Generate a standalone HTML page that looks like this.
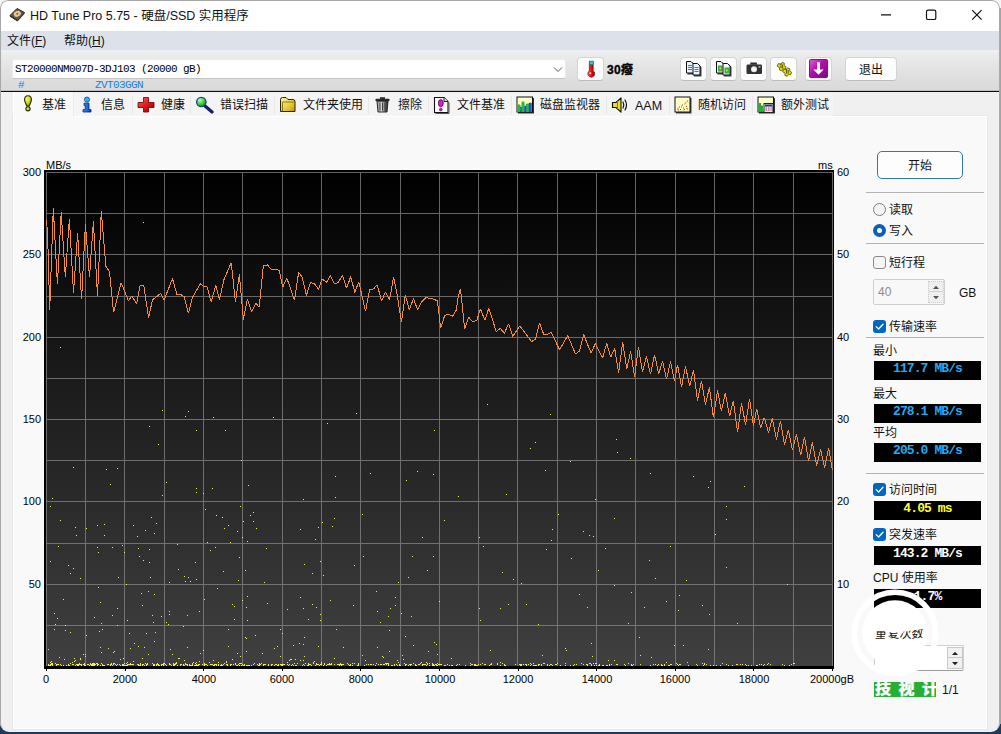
<!DOCTYPE html>
<html lang="zh-CN"><head><meta charset="utf-8"><title>HD Tune Pro 5.75 - 硬盘/SSD 实用程序</title>
<style>
*{box-sizing:border-box;margin:0;padding:0}
html,body{width:1001px;height:734px;overflow:hidden}
html{background:linear-gradient(#f6f6f6 0,#f6f6f6 722px,#1b3a63 722px)}
body{font-family:"Liberation Sans","Noto Sans CJK SC",sans-serif;font-size:12px;color:#111;position:relative}
.abs{position:absolute}
#win{position:absolute;left:0;top:0;width:1000px;height:732px;background:#f0f0f0;border-radius:8px 8px 9px 9px;overflow:hidden}
#frame{position:absolute;left:0;top:0;width:1000px;height:732px;border-radius:8px 8px 9px 9px;border:1px solid #a8a8a8;border-right-color:#aaa;border-bottom:0;pointer-events:none;z-index:9}
#title{position:absolute;left:0;top:0;width:1001px;height:31px;background:#fff}
#title .t{position:absolute;left:30px;top:8px;font-size:12.5px;line-height:16px;color:#111;white-space:nowrap;letter-spacing:0}
#menu{position:absolute;left:0;top:31px;width:1001px;height:19px;background:#dde2ea}
#menu span{position:absolute;top:2px;font-size:12px;line-height:16px;white-space:nowrap}
#combo{position:absolute;left:12px;top:59px;width:555px;height:20px;background:#fff;border:1px solid #e3e3e3;border-bottom-color:#bdbdbd;border-radius:3px}
.mono{font-family:"Liberation Mono","Noto Sans CJK SC",monospace}
#combo .v{position:absolute;left:2px;top:2px;font-size:11px;letter-spacing:-.6px;white-space:pre;color:#000}
#strip{position:absolute;left:0;top:79px;width:1001px;height:12px;background:linear-gradient(#e9e9e9,#dadada)}
#strip span{position:absolute;top:-2px;font-size:11px;letter-spacing:-.6px;color:#1a7fe0;white-space:pre}
#cut{position:absolute;left:0;top:91px;width:1001px;height:1px;background:#0c0c0c;box-shadow:0 -1px 0 rgba(0,0,0,.12)}
#tabs{position:absolute;left:0;top:92px;width:1001px;height:24px}
.tab{position:absolute;top:2px;height:22px;font-size:12px;white-space:nowrap}
.tab .lb{position:absolute;top:3px;line-height:16px}
.sep{position:absolute;top:4px;width:1px;height:18px;background:#e8e8e8}
#page{position:absolute;left:13px;top:116px;width:974px;height:613px;background:#f9f9f9;border:1px solid #fff;box-shadow:0 0 0 1px #e9e9e9}
#acttab{position:absolute;left:13px;top:92px;width:61px;height:25px;background:#f9f9f9;border-left:1px solid #fff;border-right:1px solid #ececec}
.ax{position:absolute;font-size:11px;color:#000;white-space:nowrap;line-height:12px}
.chart{position:absolute;left:44px;top:170px}
.hr{position:absolute;height:1px;background:#b4b4b4}
.lbl{position:absolute;font-size:12px;white-space:nowrap;line-height:14px;color:#111;margin-top:1px}
.lcd{position:absolute;left:874px;width:107px;height:19px;background:#000;text-align:center;font-family:"Liberation Mono",monospace;font-weight:bold;font-size:13px;letter-spacing:-.9px;line-height:15px;white-space:pre;overflow:hidden}
.cb{position:absolute;width:13px;height:13px;border-radius:3px;background:#0067c0}
.cb svg{position:absolute;left:0;top:0}
.btn{position:absolute;background:#fdfdfd;border:1px solid #d4d4d4;border-bottom-color:#bcbcbc;border-radius:4px}
</style></head><body>
<i class="abs" style="left:1000px;top:8px;width:1px;height:716px;background:#a4a4a4"></i>
<div id="win">
<div id="title"><span class="t">HD Tune Pro 5.75 - 硬盘/SSD 实用程序</span></div>
<div id="menu"><span style="left:7px">文件(<u>F</u>)</span><span style="left:64px">帮助(<u>H</u>)</span></div>
<div id="page"></div>
<div id="acttab"></div>
<div id="tabs">
<div class="abs" style="left:74px;top:1px;width:759px;height:23px;background:#f4f4f4;border-radius:0 4px 0 0"></div>
<i class="sep" style="left:132px"></i>
<i class="sep" style="left:190px"></i>
<i class="sep" style="left:274px"></i>
<i class="sep" style="left:368px"></i>
<i class="sep" style="left:428px"></i>
<i class="sep" style="left:511px"></i>
<i class="sep" style="left:606px"></i>
<i class="sep" style="left:669px"></i>
<i class="sep" style="left:752px"></i>
<svg class="abs" style="left:22.7px;top:3px" width="10" height="17" viewBox="0 0 10 17"><defs><radialGradient id="gy" cx=".35" cy=".3" r=".8"><stop offset="0" stop-color="#f4f870"/><stop offset=".5" stop-color="#d0dc18"/><stop offset="1" stop-color="#7a8000"/></radialGradient></defs><path d="M5 .8C7.6 .8 8.6 2.6 8.4 5C8.2 7.4 6.8 9.2 6.4 11H3.6C3.2 9.200 1.800 7.400 1.600 5C1.400 2.600 2.400 .8 5 .8Z" fill="url(#gy)" stroke="#2a2a08" stroke-width="1.100"/><circle cx="5" cy="13.800" r="2.1" fill="url(#gy)" stroke="#2a2a08" stroke-width="1.100"/></svg>
<svg class="abs" style="left:81px;top:4px" width="12" height="17" viewBox="0 0 12 17"><defs><linearGradient id="gb" x1="0" y1="0" x2="1" y2="0"><stop offset="0" stop-color="#3aa0f0"/><stop offset="1" stop-color="#0a3ab8"/></linearGradient></defs><circle cx="6" cy="3.6" r="2.600" fill="#2fb4e8" stroke="#0b4a9a" stroke-width=".8"/><path d="M3 7.200H8V13.600H10V16H2V13.600H4.200V9.400H3Z" fill="url(#gb)" stroke="#06247a" stroke-width=".8"/></svg>
<svg class="abs" style="left:137px;top:4px" width="18" height="17" viewBox="0 0 18 17"><defs><linearGradient id="gr" x1="0" y1="0" x2="1" y2="1"><stop offset="0" stop-color="#ff6a6a"/><stop offset=".5" stop-color="#e01818"/><stop offset="1" stop-color="#8a0000"/></linearGradient></defs><path d="M6.500 1.500H11.500V6.500H17V11.500H11.500V16H6.500V11.500H1V6.500H6.500Z" fill="url(#gr)" stroke="#7a0a0a" stroke-width=".9"/></svg>
<svg class="abs" style="left:195px;top:3px" width="20" height="19" viewBox="0 0 20 19"><defs><radialGradient id="gg" cx=".35" cy=".3" r=".8"><stop offset="0" stop-color="#b8ffb0"/><stop offset=".6" stop-color="#30c830"/><stop offset="1" stop-color="#0a7a10"/></radialGradient></defs><path d="M9.500 10.500L17 17" stroke="#14206a" stroke-width="3.200" stroke-linecap="round"/><circle cx="6.300" cy="7" r="4.700" fill="url(#gg)" stroke="#20408a" stroke-width="1.300"/></svg>
<svg class="abs" style="left:279px;top:4px" width="18" height="17" viewBox="0 0 18 17"><defs><linearGradient id="gf" x1="0" y1="0" x2="1" y2="1"><stop offset="0" stop-color="#fff8a0"/><stop offset=".6" stop-color="#e8cc30"/><stop offset="1" stop-color="#b89010"/></linearGradient></defs><path d="M1.500 15.500V3.500Q1.500 1.500 3.500 1.500H7L9 3.500H14Q16 3.500 16 5.500V15.500Z" fill="url(#gf)" stroke="#2a2200" stroke-width="1"/><path d="M3.500 15.500V6H16" fill="none" stroke="#6a5a10" stroke-width=".8"/></svg>
<svg class="abs" style="left:374px;top:4px" width="17" height="17" viewBox="0 0 17 17"><defs><linearGradient id="gt" x1="0" y1="0" x2="1" y2="0"><stop offset="0" stop-color="#8a8a8a"/><stop offset=".4" stop-color="#d8d8d8"/><stop offset="1" stop-color="#1a1a1a"/></linearGradient></defs><path d="M6 1.200H11V3H6Z" fill="#333"/><rect x="1.500" y="2.800" width="14" height="2.400" rx=".8" fill="#2a2a2a"/><path d="M3 5.200H14L13 16H4Z" fill="url(#gt)" stroke="#1a1a1a" stroke-width=".9"/><path d="M6 6.500V14.500M8.500 6.500V14.500M11 6.500V14.500" stroke="#333" stroke-width=".9"/></svg>
<svg class="abs" style="left:433px;top:4px" width="17" height="18" viewBox="0 0 17 18"><path d="M1.500 1.500H11L15 5.500V16.500H1.500Z" fill="#fdfdfd" stroke="#111" stroke-width="1.100"/><path d="M11 1.500V5.500H15" fill="#ddd" stroke="#111" stroke-width=".9"/><path d="M16 6.500V17.500H2.500" fill="none" stroke="#555" stroke-width="1"/><ellipse cx="7.800" cy="7.200" rx="2.500" ry="3.600" fill="#d020c8" stroke="#5a0a5a" stroke-width=".8"/><circle cx="7.800" cy="13.600" r="1.400" fill="#d020c8" stroke="#5a0a5a" stroke-width=".7"/></svg>
<svg class="abs" style="left:516px;top:4px" width="19" height="18" viewBox="0 0 19 18"><rect x="2" y="2" width="16" height="15.500" fill="#333"/><rect x="1" y="1" width="15.500" height="15" fill="#ffffc8" stroke="#111" stroke-width="1"/><path d="M2 16V9H4V16M6 16V6H8V16M10.500 16V8H12.500V16" fill="#20c028" stroke="#20c028" stroke-width="1"/><path d="M4.500 16V11H5.500V16M8.500 16V10H10V16M13 16V7H15.500V16" fill="#2050d0" stroke="#2050d0" stroke-width=".6"/></svg>
<svg class="abs" style="left:611px;top:4px" width="19" height="18" viewBox="0 0 19 18"><path d="M1.500 6.500H5L10 1.800V16.200L5 11.500H1.500Z" fill="#e8e020" stroke="#111" stroke-width="1.100" stroke-linejoin="round"/><path d="M6.500 5V13" stroke="#8a8400" stroke-width="1"/><path d="M12 6Q13.600 9 12 12M14 4Q17 9 14 14" fill="none" stroke="#111" stroke-width="1.200" stroke-linecap="round"/></svg>
<svg class="abs" style="left:674px;top:4px" width="18" height="18" viewBox="0 0 18 18"><rect x="2" y="2" width="15.500" height="15.500" fill="#444"/><rect x="1" y="1" width="15" height="15" fill="#ffffc8" stroke="#111" stroke-width="1"/><path d="M3 13h1M5 11h1M6 13.500h1M8 9h1M9 12h1M11 7h1M12 10.500h1M13 5h1M10 13.500h1M13 13h1M7 11h1M4 14h1" stroke="#e03030" stroke-width="1"/><path d="M4 12h1M7 10h1M10 8h1M12 6h1M12 12.500h1M9 14h1" stroke="#e0a020" stroke-width="1"/></svg>
<svg class="abs" style="left:757px;top:4px" width="19" height="18" viewBox="0 0 19 18"><rect x="2" y="2" width="16" height="15.500" fill="#333"/><rect x="1" y="1" width="15.500" height="15" fill="#ffffc8" stroke="#111" stroke-width="1"/><path d="M1.500 16V7H4V9.500H6V16Z" fill="#20b030"/><rect x="7" y="7.500" width="9" height="9" fill="#e8e8f4" stroke="#223" stroke-width="1"/><rect x="8" y="8.500" width="7" height="2" fill="#303060"/><path d="M8.500 12h1.500M11 12h1.500M13.500 12h1.200M8.500 14h1.500M11 14h1.500M13.500 14h1.200" stroke="#c03060" stroke-width="1.200"/></svg>
<span class="tab" style="left:42px"><span class="lb">基准</span></span>
<span class="tab" style="left:101px"><span class="lb">信息</span></span>
<span class="tab" style="left:161px"><span class="lb">健康</span></span>
<span class="tab" style="left:220px"><span class="lb">错误扫描</span></span>
<span class="tab" style="left:303px"><span class="lb">文件夹使用</span></span>
<span class="tab" style="left:398px"><span class="lb">擦除</span></span>
<span class="tab" style="left:457px"><span class="lb">文件基准</span></span>
<span class="tab" style="left:540px"><span class="lb">磁盘监视器</span></span>
<span class="tab" style="left:635px"><span class="lb" style="font-size:12.500px;top:4px">AAM</span></span>
<span class="tab" style="left:698px"><span class="lb">随机访问</span></span>
<span class="tab" style="left:781px"><span class="lb">额外测试</span></span>
</div>
<div class="abs" style="left:0;top:50px;width:1001px;height:41px;background:linear-gradient(#eef1f5 0,#ececec 4px,#e3e3e3 45%,#d9d9d9 100%);z-index:0"></div>
<div class="abs" style="left:12px;top:59px;width:554px;height:20px;background:#fff;border:1px solid #ececec;border-bottom:1px solid #c4c4c4;border-radius:3px"><span class="mono" style="position:absolute;left:2px;top:3px;font-size:11px;letter-spacing:-.6px;white-space:pre;color:#000">ST20000NM007D-3DJ103 (20000 gB)</span><svg class="abs" style="left:540px;top:6px" width="10" height="7" viewBox="0 0 10 7"><path d="M1 1.500L5 5.500L9 1.500" fill="none" stroke="#555" stroke-width="1"/></svg></div>
<span class="mono abs" style="left:18px;top:79px;font-size:11px;letter-spacing:-.6px;color:#1a7fe0;white-space:pre;line-height:13px">#</span>
<span class="mono abs" style="left:95px;top:79px;font-size:11px;letter-spacing:-.6px;color:#1a7fe0;white-space:pre;line-height:13px">ZVT03GGN</span>
<div class="btn" style="left:577px;top:57px;width:27px;height:24px"><svg class="abs" style="left:7.500px;top:2px" width="10.500" height="18" viewBox="0 0 11 19"><defs><linearGradient id="th" x1="0" y1="0" x2="1" y2="0"><stop offset="0" stop-color="#ff7070"/><stop offset=".5" stop-color="#e01010"/><stop offset="1" stop-color="#900"/></linearGradient></defs><path d="M3.500 1.500H7.500V11.500A3.600 3.600 0 1 1 3.500 11.500Z" fill="url(#th)" stroke="#7a0a0a" stroke-width=".8"/><rect x="3.500" y="1.200" width="4" height="3.600" fill="#38c8d8" stroke="#176" stroke-width=".6"/><circle cx="4.600" cy="14" r="1" fill="#fff" opacity=".8"/></svg></div>
<span class="abs" style="left:607px;top:63px;font-size:12px;font-weight:bold;color:#000;letter-spacing:.3px;-webkit-text-stroke:.35px #000;line-height:15px;white-space:nowrap">30癈</span>
<div class="btn" style="left:680px;top:57px;width:27px;height:24px"><svg class="abs" style="left:4px;top:2px" width="20" height="20" viewBox="0 0 20 20"><path d="M2.5 2.5h5l2.500 2.500v9.500h-7.500z" fill="#444"/><path d="M1.5 1.5h4.500l2.500 2.500v9h-7z" fill="#eaf4ff" stroke="#111" stroke-width="1"/><path d="M3.0 5.5h4M3.0 7.5h4M3.0 9.5h4" stroke="#2a7ae0" stroke-width="1.100"/><path d="M9 4.5h5l2.500 2.500v9.500h-7.500z" fill="#444"/><path d="M8 3.5h4.500l2.500 2.500v9h-7z" fill="#eaf4ff" stroke="#111" stroke-width="1"/><path d="M9.5 7.5h4M9.5 9.5h4M9.5 11.5h4" stroke="#2a7ae0" stroke-width="1.100"/></svg></div>
<div class="btn" style="left:710px;top:57px;width:27px;height:24px"><svg class="abs" style="left:4px;top:2px" width="20" height="20" viewBox="0 0 20 20"><path d="M2.5 2.5h5l2.500 2.500v9.500h-7.500z" fill="#444"/><path d="M1.5 1.5h4.500l2.500 2.500v9h-7z" fill="#f4f4fa" stroke="#111" stroke-width="1"/><rect x="3.0" y="5.5" width="4.500" height="6" fill="#30b048"/><rect x="4.5" y="7.5" width="1.600" height="1.800" fill="#e8e020"/><path d="M9 4.5h5l2.500 2.500v9.500h-7.500z" fill="#444"/><path d="M8 3.5h4.500l2.500 2.500v9h-7z" fill="#f4f4fa" stroke="#111" stroke-width="1"/><rect x="9.5" y="7.5" width="4.500" height="6" fill="#30b048"/><rect x="11" y="9.5" width="1.600" height="1.800" fill="#e8e020"/></svg></div>
<div class="btn" style="left:740px;top:57px;width:27px;height:24px"><svg class="abs" style="left:4.500px;top:4px" width="18" height="14" viewBox="0 0 18 14"><path d="M4.500 .5h6l1 2.200H4z" fill="#2c302c"/><rect x=".5" y="2.500" width="15.500" height="9.500" rx="1.300" fill="#2f332f"/><circle cx="8" cy="7.300" r="3" fill="#e8e8e8"/><circle cx="8" cy="7.300" r="1.600" fill="#fff"/><rect x="12.500" y="4.200" width="2" height="1.400" fill="#bbb"/></svg></div>
<div class="btn" style="left:770px;top:57px;width:27px;height:24px"><svg class="abs" style="left:4px;top:3px" width="19" height="18" viewBox="0 0 19 18"><g fill="#e0dc18" stroke="#6e6a00" stroke-width="1"><path d="M2 5l1.600-2.400 2.200.6 1.200-1.800 2.300.9-.2 2.100 2 1.400-.9 2.300-2.100-.2-1.400 1.900-2.300-.9.200-2.100z"/><path d="M7.500 10.500l1.600-2.400 2.200.6 1.200-1.800 2.300.9-.2 2.100 2 1.400-.9 2.300-2.100-.2-1.400 1.900-2.300-.9.200-2.100z"/></g><path d="M6 2.500v4.500M7.600 3.500v3.800M11.500 8v4.500M13.100 9v3.800" stroke="#5c5800" stroke-width="1"/></svg></div>
<div class="btn" style="left:805px;top:57px;width:27px;height:24px"><svg class="abs" style="left:3px;top:1px" width="20" height="20" viewBox="0 0 21 21"><defs><linearGradient id="pu" x1="0" y1="0" x2="1" y2="1"><stop offset="0" stop-color="#e060d8"/><stop offset=".45" stop-color="#b010a8"/><stop offset="1" stop-color="#7a0a78"/></linearGradient></defs><rect x=".5" y=".5" width="19" height="19" rx="1.500" fill="url(#pu)" stroke="#800a80" stroke-width="1"/><path d="M8.500 3.500h3v7.500h4L10 16.500 4.500 11h4z" fill="#fff"/></svg></div>
<div class="btn" style="left:845px;top:57px;width:52px;height:24px"><span class="abs" style="left:0;top:5px;width:50px;text-align:center;font-size:12px;line-height:15px">退出</span></div>
<svg class="abs" style="left:9px;top:7px" width="17" height="15" viewBox="0 0 17 15"><path d="M1 8.500L8 1.500L15.500 5.500L8.500 13.500Z" fill="#6a5a48" stroke="#2a2218" stroke-width="1"/><path d="M1 8.500L8.500 13.500V14.500L1 9.800Z" fill="#222"/><path d="M8.500 13.500L15.500 5.500V6.800L8.500 14.500Z" fill="#333"/><ellipse cx="8.300" cy="6.800" rx="3.600" ry="2.800" fill="#e8c890" transform="rotate(-25 8.300 6.800)"/><circle cx="8.300" cy="6.800" r="1" fill="#7a5a30"/></svg>
<svg class="abs" style="left:876px;top:5px" width="112" height="20" viewBox="0 0 112 20"><path d="M5 9.800H15" stroke="#111" stroke-width="1.200"/><rect x="50.500" y="5.200" width="9.300" height="9.300" rx="1.600" fill="none" stroke="#111" stroke-width="1.200"/><path d="M96.200 5.200L105.600 14.600M105.600 5.200L96.200 14.600" stroke="#111" stroke-width="1.200"/></svg>
<div id="cut"></div>
<span class="ax" style="left:46px;top:159px">MB/s</span>
<span class="ax" style="left:818px;top:159px">ms</span>
<span class="ax" style="left:10px;width:31px;text-align:right;top:166px">300</span>
<span class="ax" style="left:10px;width:31px;text-align:right;top:248px">250</span>
<span class="ax" style="left:10px;width:31px;text-align:right;top:331px">200</span>
<span class="ax" style="left:10px;width:31px;text-align:right;top:413px">150</span>
<span class="ax" style="left:10px;width:31px;text-align:right;top:495px">100</span>
<span class="ax" style="left:10px;width:31px;text-align:right;top:578px">50</span>
<span class="ax" style="left:837px;top:166px">60</span>
<span class="ax" style="left:837px;top:248px">50</span>
<span class="ax" style="left:837px;top:331px">40</span>
<span class="ax" style="left:837px;top:413px">30</span>
<span class="ax" style="left:837px;top:495px">20</span>
<span class="ax" style="left:837px;top:578px">10</span>
<span class="ax" style="left:16px;width:60px;text-align:center;top:673px">0</span>
<span class="ax" style="left:95px;width:60px;text-align:center;top:673px">2000</span>
<span class="ax" style="left:174px;width:60px;text-align:center;top:673px">4000</span>
<span class="ax" style="left:252px;width:60px;text-align:center;top:673px">6000</span>
<span class="ax" style="left:331px;width:60px;text-align:center;top:673px">8000</span>
<span class="ax" style="left:410px;width:60px;text-align:center;top:673px">10000</span>
<span class="ax" style="left:488px;width:60px;text-align:center;top:673px">12000</span>
<span class="ax" style="left:567px;width:60px;text-align:center;top:673px">14000</span>
<span class="ax" style="left:645px;width:60px;text-align:center;top:673px">16000</span>
<span class="ax" style="left:724px;width:60px;text-align:center;top:673px">18000</span>
<span class="ax" style="left:810px;top:673px">20000gB</span><i class="abs" style="left:46px;top:668px;width:1px;height:3px;background:#000"></i><i class="abs" style="left:125px;top:668px;width:1px;height:3px;background:#000"></i><i class="abs" style="left:203px;top:668px;width:1px;height:3px;background:#000"></i><i class="abs" style="left:282px;top:668px;width:1px;height:3px;background:#000"></i><i class="abs" style="left:360px;top:668px;width:1px;height:3px;background:#000"></i><i class="abs" style="left:439px;top:668px;width:1px;height:3px;background:#000"></i><i class="abs" style="left:518px;top:668px;width:1px;height:3px;background:#000"></i><i class="abs" style="left:596px;top:668px;width:1px;height:3px;background:#000"></i><i class="abs" style="left:675px;top:668px;width:1px;height:3px;background:#000"></i><i class="abs" style="left:753px;top:668px;width:1px;height:3px;background:#000"></i><i class="abs" style="left:832px;top:668px;width:1px;height:3px;background:#000"></i>
<svg class="chart" width="790" height="499" viewBox="0 0 790 499">
<defs><linearGradient id="cg" x1="0" y1="0" x2="0" y2="1"><stop offset="0" stop-color="#000"/><stop offset="1" stop-color="#404040"/></linearGradient></defs>
<rect width="790" height="499" fill="#000"/>
<rect x="2" y="2" width="787" height="494" fill="url(#cg)"/>
<path d="M2.5 2V496M41.5 2V496M80.5 2V496M120.5 2V496M159.5 2V496M198.5 2V496M238.5 2V496M277.5 2V496M316.5 2V496M356.5 2V496M395.5 2V496M434.5 2V496M473.5 2V496M513.5 2V496M552.5 2V496M591.5 2V496M631.5 2V496M670.5 2V496M709.5 2V496M749.5 2V496M788.5 2V496M2 2.5H789M2 43.5H789M2 84.5H789M2 126.5H789M2 167.5H789M2 208.5H789M2 249.5H789M2 290.5H789M2 331.5H789M2 373.5H789M2 414.5H789M2 455.5H789" stroke="#8a8a8a" stroke-opacity=".72" stroke-width="1" fill="none" shape-rendering="crispEdges"/>
<path d="M247 495.5h1M407 495.5h1M47 494.5h1M56 495.5h1M96 493.5h1M438 493.5h1M738 494.5h1M112 494.5h1M139 494.5h1M415 494.5h1M48 495.5h1M240 494.5h1M344 495.5h1M187 494.5h1M552 495.5h1M117 495.5h1M33 495.5h1M662 494.5h1M440 494.5h1M360 493.5h1M49 493.5h1M622 492.5h1M294 494.5h1M130 495.5h1M47 494.5h1M64 494.5h1M213 494.5h1M724 493.5h1M136 495.5h1M447 494.5h1M6 494.5h1M391 494.5h1M512 494.5h1M298 494.5h1M81 495.5h1M160 495.5h1M259 494.5h1M79 495.5h1M22 495.5h1M193 495.5h1M277 493.5h1M354 492.5h1M68 495.5h1M627 494.5h1M401 495.5h1M200 495.5h1M129 493.5h1M251 495.5h1M174 495.5h1M24 495.5h1M198 494.5h1M169 495.5h1M151 493.5h1M67 493.5h1M137 494.5h1M549 493.5h1M99 494.5h1M113 494.5h1M267 495.5h1M625 495.5h1M193 495.5h1M198 494.5h1M269 493.5h1M381 494.5h1M397 494.5h1M6 495.5h1M133 495.5h1M248 494.5h1M83 495.5h1M389 494.5h1M344 493.5h1M712 495.5h1M636 494.5h1M58 494.5h1M58 495.5h1M119 493.5h1M500 493.5h1M303 493.5h1M125 494.5h1M150 495.5h1M547 494.5h1M17 495.5h1M82 493.5h1M207 495.5h1M620 494.5h1M70 493.5h1M521 493.5h1M66 494.5h1M53 494.5h1M205 495.5h1M400 495.5h1M41 495.5h1M238 495.5h1M380 494.5h1M264 495.5h1M146 495.5h1M707 495.5h1M299 494.5h1M308 495.5h1M56 495.5h1M195 493.5h1M215 494.5h1M224 494.5h1M236 494.5h1M4 494.5h1M154 495.5h1M7 494.5h1M34 494.5h1M232 494.5h1M296 494.5h1M745 495.5h1M36 494.5h1M108 493.5h1M176 495.5h1M103 493.5h1M371 494.5h1M382 495.5h1M558 495.5h1M59 495.5h1M375 494.5h1M364 495.5h1M487 494.5h1M114 495.5h1M431 494.5h1M49 494.5h1M512 494.5h1M392 495.5h1M676 495.5h1M16 494.5h1M341 493.5h1M162 494.5h1M720 494.5h1M177 495.5h1M6 495.5h1M342 494.5h1M4 494.5h1M635 494.5h1M682 494.5h1M283 494.5h1M275 495.5h1M210 493.5h1M191 494.5h1M388 493.5h1M545 493.5h1M554 495.5h1M219 494.5h1M701 494.5h1M227 495.5h1M497 494.5h1M129 495.5h1M377 492.5h1M342 493.5h1M148 495.5h1M183 495.5h1M567 494.5h1M287 494.5h1M50 494.5h1M382 495.5h1M653 495.5h1M304 494.5h1M660 493.5h1M445 495.5h1M85 494.5h1M347 495.5h1M33 495.5h1M489 493.5h1M99 494.5h1M87 494.5h1M295 495.5h1M230 495.5h1M180 493.5h1M234 495.5h1M378 494.5h1M174 495.5h1M258 495.5h1M383 494.5h1M620 495.5h1M376 493.5h1M171 494.5h1M113 493.5h1M110 494.5h1M704 495.5h1M565 495.5h1M285 494.5h1M130 495.5h1M723 494.5h1M40 493.5h1M148 493.5h1M678 493.5h1M580 494.5h1M29 494.5h1M258 495.5h1M200 495.5h1M6 494.5h1M713 495.5h1M294 494.5h1M327 494.5h1M460 495.5h1M244 495.5h1M152 495.5h1M189 494.5h1M202 495.5h1M76 495.5h1M179 494.5h1M503 495.5h1M430 494.5h1M559 495.5h1M118 494.5h1M438 493.5h1M385 493.5h1M749 493.5h1M33 495.5h1M93 494.5h1M199 495.5h1M715 494.5h1M167 494.5h1M109 495.5h1M494 494.5h1M12 495.5h1M238 494.5h1M51 494.5h1M484 494.5h1M126 494.5h1M238 495.5h1M272 493.5h1M277 492.5h1M551 493.5h1M350 495.5h1M14 494.5h1M70 493.5h1M282 495.5h1M85 494.5h1M152 492.5h1M367 494.5h1M624 495.5h1M627 494.5h1M167 494.5h1M96 495.5h1M34 495.5h1M634 495.5h1M475 494.5h1M324 494.5h1M339 494.5h1M372 495.5h1M348 495.5h1M100 495.5h1M72 495.5h1M482 495.5h1M388 494.5h1M719 495.5h1M693 494.5h1M52 493.5h1M572 494.5h1M617 495.5h1M160 494.5h1M31 495.5h1M130 494.5h1M482 494.5h1M477 495.5h1M336 494.5h1M563 495.5h1M238 494.5h1M28 494.5h1M102 494.5h1M495 494.5h1M83 495.5h1M172 494.5h1M186 495.5h1M75 494.5h1M306 494.5h1M12 494.5h1M489 495.5h1M36 494.5h1M47 495.5h1M12 494.5h1M153 495.5h1M385 495.5h1M236 494.5h1M40 495.5h1M8 493.5h1M562 495.5h1M178 495.5h1M539 494.5h1M203 495.5h1M666 495.5h1M565 494.5h1M666 495.5h1M332 493.5h1M432 495.5h1M112 494.5h1M263 495.5h1M53 495.5h1M53 493.5h1M84 494.5h1M87 494.5h1M479 494.5h1M78 495.5h1M243 494.5h1M19 495.5h1M280 493.5h1M26 493.5h1M264 494.5h1M408 495.5h1M620 495.5h1M4 495.5h1M6 492.5h1M142 494.5h1M217 493.5h1M86 493.5h1M476 494.5h1M305 495.5h1M672 495.5h1M158 494.5h1M179 494.5h1M265 494.5h1M131 493.5h1M98 494.5h1M147 495.5h1M119 495.5h1M396 494.5h1M250 493.5h1M80 495.5h1M555 495.5h1M83 494.5h1M295 494.5h1M110 494.5h1M320 495.5h1M486 493.5h1M239 494.5h1M477 494.5h1M322 494.5h1M141 494.5h1M32 494.5h1M79 494.5h1M389 494.5h1M161 494.5h1M271 495.5h1M13 494.5h1M320 495.5h1M172 494.5h1M168 494.5h1M100 495.5h1M356 495.5h1M269 492.5h1M355 495.5h1M644 495.5h1M286 494.5h1M5 495.5h1M215 495.5h1M326 494.5h1M499 493.5h1M46 494.5h1M109 495.5h1M497 495.5h1M79 495.5h1M264 493.5h1M129 494.5h1M152 494.5h1M421 495.5h1M374 494.5h1M355 494.5h1M8 495.5h1M355 494.5h1M285 493.5h1M726 494.5h1M24 494.5h1M388 495.5h1M279 495.5h1M162 494.5h1M626 494.5h1M382 492.5h1M252 495.5h1M228 494.5h1M33 494.5h1M40 494.5h1M516 495.5h1M505 495.5h1M140 495.5h1M497 494.5h1M426 493.5h1M230 495.5h1M44 494.5h1M33 495.5h1M14 494.5h1M314 495.5h1M117 494.5h1M7 493.5h1M69 493.5h1M100 495.5h1M555 494.5h1M41 495.5h1M552 493.5h1M543 494.5h1M618 495.5h1M237 494.5h1M369 493.5h1M280 494.5h1M112 494.5h1M277 494.5h1M430 494.5h1M253 493.5h1M456 495.5h1M287 493.5h1M611 494.5h1M4 494.5h1M35 494.5h1M434 494.5h1M264 494.5h1M154 494.5h1M353 495.5h1M195 495.5h1M69 494.5h1M584 493.5h1M362 494.5h1M145 494.5h1M276 494.5h1M306 495.5h1M83 495.5h1M596 494.5h1M394 494.5h1M430 495.5h1M194 494.5h1M154 495.5h1M688 495.5h1M453 493.5h1M197 493.5h1M507 494.5h1M170 495.5h1M196 493.5h1M633 494.5h1M45 495.5h1M513 493.5h1M82 495.5h1M365 494.5h1M183 495.5h1M543 495.5h1M108 493.5h1M344 494.5h1M476 495.5h1M112 495.5h1M204 495.5h1M635 494.5h1M129 494.5h1M46 493.5h1M506 494.5h1M197 495.5h1M76 495.5h1M550 495.5h1M740 495.5h1M109 494.5h1M143 494.5h1M433 495.5h1M139 495.5h1M63 494.5h1M209 494.5h1M155 494.5h1M555 495.5h1M613 495.5h1M374 494.5h1M660 494.5h1M143 495.5h1M282 495.5h1M6 494.5h1M94 495.5h1M245 494.5h1M49 494.5h1M390 495.5h1M140 495.5h1M192 495.5h1M529 495.5h1M16 494.5h1M532 494.5h1M37 494.5h1M214 495.5h1M308 493.5h1M114 494.5h1M565 494.5h1M296 493.5h1M588 495.5h1M43 494.5h1M191 494.5h1M403 494.5h1M329 494.5h1M669 495.5h1M486 495.5h1M471 494.5h1M395 494.5h1M233 495.5h1M94 494.5h1M205 495.5h1M405 495.5h1M224 495.5h1M220 494.5h1M154 494.5h1M350 494.5h1M237 494.5h1M170 494.5h1M12 494.5h1M652 494.5h1M122 495.5h1M50 493.5h1M85 494.5h1M119 494.5h1M692 494.5h1M659 495.5h1M434 494.5h1M460 494.5h1M547 495.5h1M297 494.5h1M379 494.5h1M142 494.5h1M441 494.5h1M696 494.5h1M11 493.5h1M393 495.5h1M272 494.5h1M78 494.5h1M334 494.5h1M132 493.5h1M389 495.5h1M121 494.5h1M145 495.5h1M482 494.5h1M234 494.5h1M6 494.5h1M506 494.5h1M378 495.5h1M436 494.5h1M94 495.5h1M78 495.5h1M50 495.5h1M542 494.5h1M131 493.5h1M441 494.5h1M342 493.5h1M334 494.5h1M191 493.5h1M617 494.5h1M186 495.5h1M186 494.5h1M273 494.5h1M426 495.5h1M405 495.5h1M96 495.5h1M267 495.5h1M182 494.5h1M503 494.5h1M73 494.5h1M632 493.5h1M609 494.5h1M269 493.5h1M383 493.5h1M344 495.5h1M280 494.5h1M461 495.5h1M389 495.5h1M293 494.5h1M297 495.5h1M136 494.5h1M85 494.5h1M275 495.5h1M237 495.5h1M98 495.5h1M103 494.5h1M25 495.5h1M314 494.5h1M530 494.5h1M477 494.5h1M33 495.5h1M231 494.5h1M33 495.5h1M543 495.5h1M331 495.5h1M219 495.5h1M39 494.5h1M567 494.5h1M526 495.5h1M215 493.5h1M476 494.5h1M326 494.5h1M702 495.5h1M200 495.5h1M413 494.5h1M313 495.5h1M237 495.5h1M182 494.5h1M391 494.5h1M110 495.5h1M130 494.5h1M89 494.5h1M274 494.5h1M151 495.5h1M340 494.5h1M276 494.5h1M57 493.5h1M66 495.5h1M85 494.5h1M412 495.5h1M494 495.5h1M24 494.5h1M635 494.5h1M130 494.5h1M249 495.5h1M280 494.5h1M183 494.5h1M375 494.5h1M122 495.5h1M521 495.5h1M71 494.5h1M547 495.5h1M216 494.5h1M258 495.5h1M684 495.5h1M427 494.5h1M150 495.5h1M614 494.5h1M227 494.5h1M490 495.5h1M24 495.5h1M67 494.5h1M283 494.5h1M428 494.5h1M89 494.5h1M88 494.5h1M194 494.5h1M371 495.5h1M174 494.5h1M446 494.5h1M310 493.5h1M573 494.5h1M80 495.5h1M587 495.5h1M587 495.5h1M14 494.5h1M163 495.5h1M130 494.5h1M95 495.5h1M546 493.5h1M458 493.5h1M511 494.5h1M148 494.5h1M89 494.5h1M86 494.5h1M221 494.5h1M290 494.5h1M717 494.5h1M261 493.5h1M606 495.5h1M140 495.5h1M361 494.5h1M60 495.5h1M447 493.5h1M131 494.5h1M295 495.5h1M8 495.5h1M37 495.5h1M508 495.5h1M200 494.5h1M750 493.5h1M276 494.5h1M481 494.5h1M49 495.5h1M366 495.5h1M266 494.5h1M8 494.5h1M431 495.5h1M130 495.5h1M63 494.5h1M54 494.5h1M197 495.5h1M127 495.5h1M304 494.5h1M491 495.5h1M456 492.5h1M260 495.5h1M698 494.5h1M492 495.5h1M46 494.5h1M37 494.5h1M453 494.5h1M352 494.5h1M747 494.5h1M251 495.5h1M581 495.5h1M456 495.5h1M587 494.5h1M344 493.5h1M102 495.5h1M361 495.5h1M573 494.5h1M24 494.5h1M421 495.5h1M115 495.5h1M125 493.5h1M589 494.5h1M482 495.5h1M84 494.5h1M48 494.5h1M172 495.5h1M177 494.5h1M166 494.5h1M658 493.5h1M188 489.5h1M299 477.5h1M140 490.5h1M122 452.5h1M197 493.5h1M639 475.5h1M101 493.5h1M113 493.5h1M643 492.5h1M28 492.5h1M284 494.5h1M321 490.5h1M120 493.5h1M76 489.5h1M143 477.5h1M119 493.5h1M31 490.5h1M366 494.5h1M358 485.5h1M211 465.5h1M256 490.5h1M96 494.5h1M169 490.5h1M160 493.5h1M596 485.5h1M361 466.5h1M4 479.5h1M336 452.5h1M156 483.5h1M260 486.5h1M149 492.5h1M314 493.5h1M345 481.5h1M159 480.5h1M570 490.5h1M83 492.5h1M70 481.5h1M343 493.5h1M498 485.5h1M243 492.5h1M245 490.5h1M15 487.5h1M41 484.5h1M182 492.5h1M548 486.5h1M564 490.5h1M246 489.5h1M196 486.5h1M255 473.5h1M128 484.5h1M218 483.5h1M251 489.5h1M20 489.5h1M274 476.5h1M290 488.5h1M30 488.5h1M80 493.5h1M537 493.5h1M39 484.5h1M318 485.5h1M276 444.5h1M98 488.5h1M7 491.5h1M174 492.5h1M337 494.5h1M202 481.5h1M135 488.5h1M247 489.5h1M384 481.5h1M134 488.5h1M36 488.5h1M270 491.5h1M182 491.5h1M390 472.5h1M41 486.5h1M35 493.5h1M392 474.5h1M141 493.5h1M69 482.5h1M104 484.5h1M30 491.5h1M155 491.5h1M369 475.5h1M102 463.5h1M259 490.5h1M359 489.5h1M446 480.5h1M83 450.5h1M193 483.5h1M64 478.5h1M393 493.5h1M94 476.5h1M607 487.5h1M36 489.5h1M165 492.5h1M48 493.5h1M392 494.5h1M338 486.5h1M89 491.5h1M110 471.5h1M100 477.5h1M79 488.5h1M80 493.5h1M353 490.5h1M132 492.5h1M86 478.5h1M14 376.5h1M522 480.5h1M202 437.5h1M393 484.5h1M439 376.5h1M50 447.5h1M743 414.5h1M11 454.5h1M310 395.5h1M117 446.5h1M152 260.5h1M482 434.5h1M595 467.5h1M125 441.5h1M105 256.5h1M90 473.5h1M152 409.5h1M309 435.5h1M259 438.5h1M6 336.5h1M318 344.5h1M256 359.5h1M223 433.5h1M94 378.5h1M276 450.5h1M146 411.5h1M400 350.5h1M268 403.5h1M60 354.5h1M286 430.5h1M378 367.5h1M29 398.5h1M112 353.5h1M222 378.5h1M212 358.5h1M264 449.5h1M664 479.5h1M238 463.5h1M152 322.5h1M85 463.5h1M204 315.5h1M118 325.5h1M570 348.5h1M220 412.5h1M584 453.5h1M203 450.5h1M611 408.5h1M260 467.5h1M143 445.5h1M682 397.5h1M53 355.5h1M435 438.5h1M634 440.5h1M665 444.5h1M464 434.5h1M209 342.5h1M274 357.5h1M6 391.5h1M339 487.5h1M626 376.5h1M477 413.5h1M600 437.5h1M407 488.5h1M383 400.5h1M389 304.5h1M57 482.5h1M345 460.5h1M260 394.5h1M333 477.5h1M203 426.5h1M545 365.5h1M13 448.5h1M202 468.5h1M233 476.5h1M80 382.5h1M622 431.5h1M161 339.5h1M332 421.5h1M104 421.5h1M10 459.5h1M36 408.5h1M56 432.5h1M368 386.5h1M291 306.5h1M98 435.5h1M54 417.5h1M357 443.5h1M184 459.5h1M110 363.5h1M561 378.5h1M32 365.5h1M201 400.5h1M573 282.5h1M144 407.5h1M693 453.5h1M605 390.5h1M414 326.5h1M21 460.5h1M95 386.5h1M326 303.5h1M268 434.5h1M642 410.5h1M114 274.5h1M8 328.5h1M395 431.5h1M26 462.5h1M664 317.5h1M535 424.5h1M209 351.5h1M19 429.5h1M82 414.5h1M124 454.5h1M163 372.5h1M199 351.5h1M333 441.5h1M570 415.5h1M24 395.5h1M526 291.5h1M53 377.5h1M521 478.5h1M78 375.5h1M551 329.5h1M630 475.5h1M508 359.5h1M122 312.5h1M501 300.5h1M291 327.5h1M171 377.5h1M547 473.5h1M279 405.5h1M190 436.5h1M172 345.5h1M292 459.5h1M658 435.5h1M180 358.5h1M539 361.5h1M364 407.5h1M54 382.5h1M57 453.5h1M649 306.5h1M184 476.5h1M66 314.5h1M554 400.5h1M93 366.5h1M139 456.5h1M21 455.5h1M179 401.5h1M140 406.5h1M682 349.5h1M109 452.5h1M514 344.5h1M362 310.5h1M166 380.5h1M173 418.5h1M507 370.5h1M125 412.5h1M345 481.5h1M184 355.5h1M106 407.5h1M671 364.5h1M344 446.5h1M206 345.5h1M42 358.5h1M389 386.5h1M60 365.5h1M196 336.5h1M58 459.5h1M10 443.5h1M491 272.5h1M178 347.5h1M99 390.5h1M105 379.5h1M62 299.5h1M271 369.5h1M16 350.5h1M151 392.5h1M152 318.5h1M549 366.5h1M527 388.5h1M203 371.5h1M89 355.5h1M256 427.5h1M198 367.5h1M125 444.5h1M201 467.5h1M373 301.5h1M42 465.5h1M543 437.5h1M74 407.5h1M73 455.5h1M107 347.5h1M184 355.5h1M26 403.5h1M682 336.5h1M502 379.5h1M236 486.5h1M462 324.5h1M390 260.5h1M351 435.5h1M276 391.5h1M587 422.5h1M193 361.5h1M243 439.5h1M283 253.5h1M469 409.5h1M31 357.5h1M354 412.5h1M55 461.5h1M68 377.5h1M105 392.5h1M126 479.5h1M134 399.5h1M186 372.5h1M198 430.5h1M458 402.5h1M101 360.5h1M190 449.5h1M133 374.5h1M436 450.5h1M278 352.5h1M288 356.5h1M572 269.5h1M194 410.5h1M635 425.5h1M108 445.5h1M494 454.5h1M346 438.5h1M259 329.5h1M249 475.5h1M56 477.5h1M351 427.5h1M236 459.5h1M435 367.5h1M367 446.5h1M160 429.5h1M97 423.5h1M73 438.5h1M272 437.5h1M168 318.5h1M290 348.5h1M230 478.5h1M506 244.5h1M141 411.5h1M159 323.5h1M111 462.5h1M456 438.5h1M319 386.5h1M259 474.5h1M195 387.5h1M155 441.5h1M700 316.5h1M68 445.5h1M110 424.5h1M188 434.5h1M16 177.5h1M99 52.5h1M144 241.5h1M118 240.5h1M169 247.5h1M181 260.5h1M312 243.5h1M443 234.5h1M486 278.5h1M586 288.5h1M73 298.5h1M29 297.5h1M141 246.5h1M229 247.5h1M197 290.5h1M606 303.5h1M666 311.5h1" stroke="#f2f048" stroke-width="1" fill="none" shape-rendering="crispEdges"/>
<polyline points="2.5,49.6 3.6,64.4 5.7,139.7 9.3,38.2 13.4,114.3 17.2,42.3 21.3,107.0 25.4,48.8 29.5,122.5 33.6,63.5 37.6,129.0 41.4,54.5 45.5,107.0 49.4,51.3 53.5,125.7 57.3,41.1 61.9,96.3 65.5,102.0 69.6,142.3 77.2,112.7 84.4,130.6 88.0,126.0 92.6,134.1 96.1,115.2 99.7,115.2 104.6,147.9 108.4,130.0 116.6,123.4 120.1,130.0 128.5,108.6 132.9,124.4 136.5,124.4 140.1,126.5 144.4,143.3 148.2,128.0 156.4,113.7 159.6,116.3 163.2,116.8 167.2,132.1 171.8,115.2 175.4,130.0 180.0,109.6 187.2,92.8 191.5,132.1 195.3,104.5 199.4,149.5 203.5,129.0 207.6,142.3 211.7,133.1 215.2,137.2 219.3,95.8 223.4,94.8 227.5,99.9 231.6,99.4 235.2,100.4 238.7,117.3 242.8,108.1 250.5,130.0 254.6,102.5 258.2,107.1 262.4,125.5 266.3,112.7 270.4,113.7 274.5,119.3 278.1,109.1 282.7,112.2 286.2,105.5 290.8,114.2 294.4,112.2 298.5,105.5 302.6,118.3 306.7,106.6 310.8,122.4 314.8,111.7 321.5,141.3 325.6,119.8 329.7,118.8 333.2,114.7 337.6,131.1 341.4,121.9 345.5,130.0 349.6,107.2 353.2,125.2 357.4,151.8 361.3,125.2 365.4,140.0 369.5,128.3 373.6,140.0 377.7,131.9 381.8,127.6 385.8,128.3 389.9,129.3 393.5,130.9 396.6,158.4 400.6,145.7 404.7,144.1 408.5,146.2 412.4,140.0 413.9,128.3 416.5,118.6 420.6,158.9 424.7,147.2 428.7,151.8 432.8,150.3 436.4,139.0 441.0,150.3 444.8,138.0 452.2,161.4 456.3,158.3 460.4,163.4 464.5,153.7 468.8,166.5 475.7,155.8 487.5,171.6 491.6,169.0 495.6,152.7 499.7,164.4 503.3,164.4 507.2,162.4 515.6,179.8 523.7,165.5 531.4,183.8 535.5,181.3 539.6,164.6 547.2,183.2 551.3,173.5 558.5,188.3 562.8,173.0 566.6,187.3 570.7,178.6 574.6,202.6 578.7,172.0 582.8,199.0 586.6,181.2 590.6,206.7 594.4,176.6 598.5,202.1 602.4,186.3 606.5,204.1 610.6,184.7 614.7,204.1 618.5,190.9 622.6,209.2 626.6,191.4 630.4,211.0 633.5,194.7 637.6,216.8 641.5,196.6 645.8,216.2 649.5,199.6 653.5,230.9 657.4,210.7 661.5,234.6 665.4,217.4 669.4,247.4 673.6,220.5 677.4,241.3 681.3,222.9 685.6,246.2 689.3,230.9 693.6,262.1 697.5,233.3 701.6,254.8 705.5,229.0 709.5,256.0 712.7,238.7 716.6,258.3 720.3,247.7 724.6,263.0 728.2,248.3 732.5,269.8 736.4,250.7 740.5,274.7 744.4,259.9 748.5,280.2 752.4,264.2 756.7,285.1 760.5,266.7 764.6,291.2 768.4,272.2 772.6,295.5 776.7,279.6 780.7,298.0 784.6,277.7 788.3,299.8" fill="none" stroke="#f28c3e" stroke-width="1" stroke-linejoin="bevel" shape-rendering="crispEdges"/>
</svg>
<div class="abs" style="left:877px;top:151px;width:86px;height:28px;border:1px solid #2f78b8;border-radius:5px;background:#fdfdfd"></div>
<span class="lbl" style="left:877px;width:86px;text-align:center;top:158px">开始</span>
<i class="hr" style="left:866px;top:192px;width:118px"></i>
<i class="hr" style="left:866px;top:243px;width:118px"></i>
<i class="hr" style="left:866px;top:337px;width:118px"></i>
<i class="hr" style="left:866px;top:473px;width:118px"></i>
<i class="abs" style="left:873px;top:203px;width:13px;height:13px;border-radius:50%;border:1px solid #7d7d7d;background:#f3f3f3"></i>
<span class="lbl" style="left:889px;top:202px">读取</span>
<i class="abs" style="left:873px;top:224px;width:13px;height:13px;border-radius:50%;border:4px solid #0a5fb8;background:#fff"></i>
<span class="lbl" style="left:889px;top:223px">写入</span>
<i class="abs" style="left:873px;top:256px;width:13px;height:13px;border-radius:3px;border:1px solid #8a8a8a;background:#f5f5f5"></i>
<span class="lbl" style="left:889px;top:255px">短行程</span>
<div class="abs" style="left:873px;top:279px;width:72px;height:26px;border:1px solid #cfcfcf;border-radius:2px;background:#f8f8f8"><span class="abs" style="left:4px;top:5px;font-size:12px;line-height:14px;color:#8c8c8c">40</span><i class="abs" style="left:54px;top:1px;width:16px;height:22px;background:#efefef;border:1px dotted #ccc"></i><i class="abs" style="left:55px;top:11px;width:14px;height:1px;background:#d0d0d0"></i><svg class="abs" style="left:58px;top:5px" width="8" height="15" viewBox="0 0 8 15"><path d="M1 4L4 .8L7 4ZM1 11L4 14.200L7 11Z" fill="#555"/></svg></div>
<span class="lbl" style="left:959px;top:285px;font-size:12px">GB</span>
<i class="cb" style="left:873px;top:320px"><svg width="13" height="13" viewBox="0 0 13 13"><path d="M3.200 6.600L5.600 9L10 4.200" fill="none" stroke="#fff" stroke-width="1.300" stroke-linecap="round" stroke-linejoin="round"/></svg></i>
<span class="lbl" style="left:889px;top:319px">传输速率</span>
<span class="lbl" style="left:873px;top:343px">最小</span>
<div class="lcd" style="top:361px;color:#22aaf2">117.7 MB/s</div>
<span class="lbl" style="left:873px;top:386px">最大</span>
<div class="lcd" style="top:404px;color:#22aaf2">278.1 MB/s</div>
<span class="lbl" style="left:873px;top:425px">平均</span>
<div class="lcd" style="top:443px;color:#22aaf2">205.0 MB/s</div>
<i class="cb" style="left:873px;top:483px"><svg width="13" height="13" viewBox="0 0 13 13"><path d="M3.200 6.600L5.600 9L10 4.200" fill="none" stroke="#fff" stroke-width="1.300" stroke-linecap="round" stroke-linejoin="round"/></svg></i>
<span class="lbl" style="left:889px;top:482px">访问时间</span>
<div class="lcd" style="top:501px;color:#ffff30">4.05 ms</div>
<i class="cb" style="left:873px;top:528px"><svg width="13" height="13" viewBox="0 0 13 13"><path d="M3.200 6.600L5.600 9L10 4.200" fill="none" stroke="#fff" stroke-width="1.300" stroke-linecap="round" stroke-linejoin="round"/></svg></i>
<span class="lbl" style="left:889px;top:527px">突发速率</span>
<div class="lcd" style="top:546px;color:#fff">143.2 MB/s</div>
<span class="lbl" style="left:873px;top:570px">CPU 使用率</span>
<div class="lcd" style="top:589px;color:#fff">1.7%</div>
<div class="abs" style="left:874px;top:645px;width:90px;height:26px;border:1px solid #cfcfcf;border-bottom-color:#9a9a9a;border-radius:2px;background:#fff"><i class="abs" style="left:72px;top:1px;width:16px;height:22px;background:#f1f1f1;border:1px solid #c8c8c8"></i><i class="abs" style="left:73px;top:11px;width:14px;height:1px;background:#c8c8c8"></i><svg class="abs" style="left:76px;top:5px" width="8" height="15" viewBox="0 0 8 15"><path d="M1 4L4 .8L7 4ZM1 11L4 14.200L7 11Z" fill="#222"/></svg></div>
<svg class="abs" style="left:834.700px;top:573.100px" width="120" height="120" viewBox="0 0 120 120"><circle cx="60" cy="60" r="40.700" fill="none" stroke="#fff" stroke-width="5.600"/><circle cx="60" cy="60" r="32.800" fill="#fff"/></svg>
<i class="abs" style="left:875px;top:652px;width:46px;height:20px;background:linear-gradient(90deg,#fff 78%,rgba(255,255,255,0))"></i>
<span class="lbl" style="left:875px;top:626px;clip-path:polygon(0 30%,20% 30%,20% 100%,0 100%,0 30%,45% 40%,100% 15%,100% 75%,45% 100%);letter-spacing:.2px">重复次数</span>
<div class="abs" style="left:874px;top:681.500px;width:62px;height:15.500px;background:#25b034;overflow:hidden"><span class="abs" style="left:1px;top:-5px;font-size:16px;line-height:24px;font-weight:900;color:#fff;letter-spacing:7.500px;white-space:nowrap;-webkit-text-stroke:.25px #fff;transform:scaleY(.92);transform-origin:0 50%;font-family:'Liberation Sans','Noto Sans CJK SC',sans-serif">技视计</span></div>
<span class="lbl" style="left:942px;top:682px;font-size:12px">1/1</span>
<div id="frame"></div>
</div>
</body></html>
